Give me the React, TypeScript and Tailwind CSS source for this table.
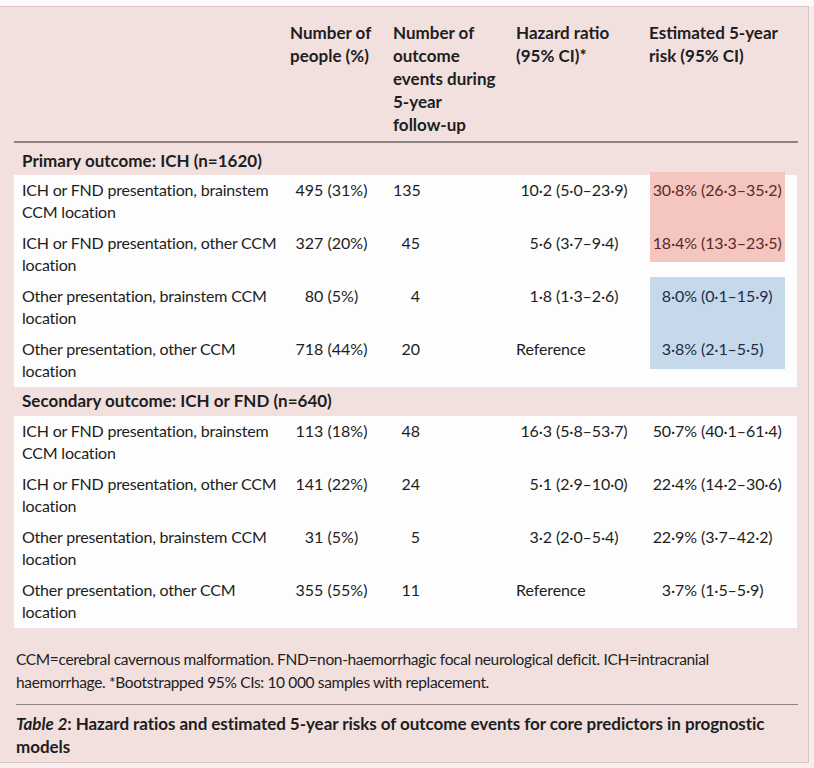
import React from "react";

type Row = {
  l1: string;
  l2: string;
  n: string;
  ev: string;
  hr: [string, string] | string;
  risk: [string, string];
  tone?: "red" | "blue";
};

const primary: Row[] = [
  { l1: "ICH or FND presentation, brainstem", l2: "CCM location", n: "495 (31%)", ev: "135", hr: ["10·2", "(5·0–23·9)"], risk: ["30·8%", "(26·3–35·2)"], tone: "red" },
  { l1: "ICH or FND presentation, other CCM", l2: "location", n: "327 (20%)", ev: "45", hr: ["5·6", "(3·7–9·4)"], risk: ["18·4%", "(13·3–23·5)"], tone: "red" },
  { l1: "Other presentation, brainstem CCM", l2: "location", n: "80 (5%)", ev: "4", hr: ["1·8", "(1·3–2·6)"], risk: ["8·0%", "(0·1–15·9)"], tone: "blue" },
  { l1: "Other presentation, other CCM", l2: "location", n: "718 (44%)", ev: "20", hr: "Reference", risk: ["3·8%", "(2·1–5·5)"], tone: "blue" },
];

const secondary: Row[] = [
  { l1: "ICH or FND presentation, brainstem", l2: "CCM location", n: "113 (18%)", ev: "48", hr: ["16·3", "(5·8–53·7)"], risk: ["50·7%", "(40·1–61·4)"] },
  { l1: "ICH or FND presentation, other CCM", l2: "location", n: "141 (22%)", ev: "24", hr: ["5·1", "(2·9–10·0)"], risk: ["22·4%", "(14·2–30·6)"] },
  { l1: "Other presentation, brainstem CCM", l2: "location", n: "31 (5%)", ev: "5", hr: ["3·2", "(2·0–5·4)"], risk: ["22·9%", "(3·7–42·2)"] },
  { l1: "Other presentation, other CCM", l2: "location", n: "355 (55%)", ev: "11", hr: "Reference", risk: ["3·7%", "(1·5–5·9)"] },
];

const grid = "grid grid-cols-[268px_103px_123px_133px_1fr]";

function DataRow({ r }: { r: Row }) {
  const riskColor =
    r.tone === "red" ? "text-[#5e2826]" : r.tone === "blue" ? "text-[#1f2b47]" : "";
  return (
    <div className={`${grid} pt-[4px] pb-[5px] leading-[22px] relative`}>
      <div className="whitespace-nowrap tracking-[-0.2px]">
        {r.l1}
        <br />
        {r.l2}
      </div>
      <div className="w-[83px] text-center whitespace-nowrap">{r.n}</div>
      <div className="w-[27px] text-right">{r.ev}</div>
      <div className="whitespace-nowrap tracking-[-0.1px]">
        {typeof r.hr === "string" ? (
          <span>{r.hr}</span>
        ) : (
          <>
            <span className="inline-block w-[36px] text-right">{r.hr[0]}</span> {r.hr[1]}
          </>
        )}
      </div>
      <div className={`whitespace-nowrap tracking-[-0.1px] ${riskColor}`}>
        <span className="inline-block w-[48px] text-right">{r.risk[0]}</span> {r.risk[1]}
      </div>
    </div>
  );
}

export default function App() {
  return (
    <div
      className="w-[814px] h-[768px] bg-[#f7eeee] overflow-hidden text-[#211d1e]"
      style={{ fontFamily: "Lato, 'Liberation Sans', sans-serif" }}
    >
      <div className="h-[6px] bg-[#fdfafa]" />
      <div className="w-[809px] h-[757px] bg-[#f2e0df] border-t-[1.5px] border-r-[1.5px] border-b border-[#dcc3c3] pl-[14px] pr-[10px] pt-[14px]">
        {/* Header */}
        <div className={`${grid} pl-[8px] font-bold text-[17px] leading-[23px]`}>
          <div />
          <div>
            Number of
            <br />
            people (%)
          </div>
          <div>
            Number of
            <br />
            outcome
            <br />
            events during
            <br />
            5-year
            <br />
            follow-up
          </div>
          <div>
            Hazard ratio
            <br />
            (95% CI)*
          </div>
          <div>
            Estimated 5-year
            <br />
            risk (95% CI)
          </div>
        </div>
        <div className="mt-[5px] w-[784px] h-[1.5px] bg-[#8c8282]" />

        {/* Primary */}
        <div className="pl-[8px] pt-[7px] pb-[3px] font-bold text-[17px] leading-[22px]">
          Primary outcome: ICH (n=1620)
        </div>
        <div className="relative w-[783px] bg-[#fefdfd] pl-[8px] text-[16px]">
          <div className="absolute left-[636px] top-[-3px] w-[135px] h-[90px] bg-[#f4c6bf]" />
          <div className="absolute left-[636px] top-[102px] w-[135px] h-[92px] bg-[#c5d9eb]" />
          {primary.map((r, i) => (
            <DataRow key={i} r={r} />
          ))}
        </div>

        {/* Secondary */}
        <div className="pl-[8px] pt-[3px] pb-[4px] font-bold text-[17px] leading-[22px]">
          Secondary outcome: ICH or FND (n=640)
        </div>
        <div className="w-[783px] bg-[#fefdfd] pl-[8px] text-[16px]">
          {secondary.map((r, i) => (
            <DataRow key={i} r={r} />
          ))}
        </div>

        {/* Footnote */}
        <div className="mt-[20px] pl-[2px] text-[15.5px] leading-[23px] whitespace-nowrap tracking-[-0.35px]">
          CCM=cerebral cavernous malformation. FND=non-haemorrhagic focal neurological deficit. ICH=intracranial
          <br />
          haemorrhage. *Bootstrapped 95% CIs: 10 000 samples with replacement.
        </div>
        <div className="mt-[10px] ml-[2px] w-[782px] h-[1.5px] bg-[#8c8282]" />
        <div className="mt-[7px] pl-[2px] font-bold text-[17px] leading-[23px] whitespace-nowrap tracking-[-0.05px]">
          <span className="italic">Table 2</span>: Hazard ratios and estimated 5-year risks of outcome events for core predictors in prognostic
          <br />
          models
        </div>
      </div>
    </div>
  );
}
